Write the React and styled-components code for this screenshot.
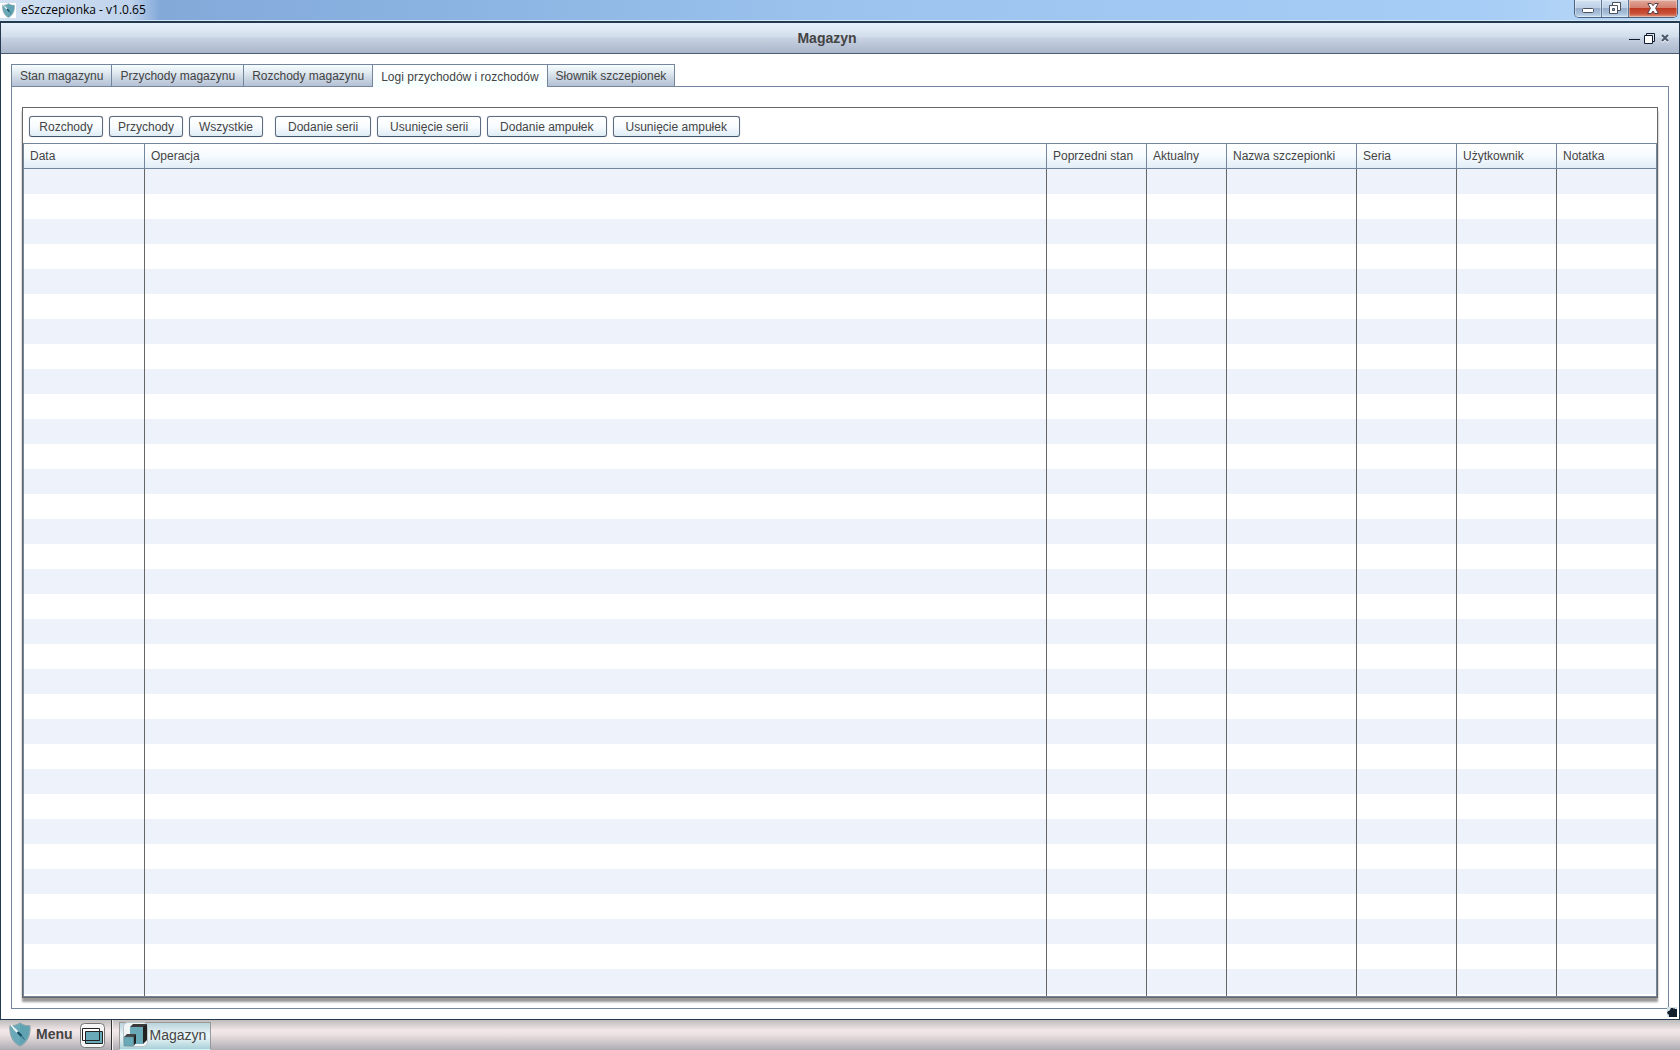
import React, { useState } from 'react';
import styled, { createGlobalStyle } from 'styled-components';

const COLOR = {
  text: '#444444',
  frame: '#23394f',
  line: '#74869e',
  grid: '#666666',
  stripe: '#eef3fb',
  teal: '#6aa9b8',
};

const GlobalStyle = createGlobalStyle`
  * {
    box-sizing: border-box;
  }
  body {
    margin: 0;
    background: #ffffff;
    color: ${COLOR.text};
    font-family: 'Liberation Sans', Arial, sans-serif;
    font-size: 12px;
  }
  button {
    font-family: inherit;
    color: inherit;
    cursor: pointer;
  }
`;

const Page = styled.div`
  display: flex;
  flex-direction: column;
  min-height: 100vh;
`;

const SystemBar = styled.header`
  display: flex;
  justify-content: space-between;
  height: 21px;
  background: linear-gradient(90deg, #d3e1f2 0, #bfd3ec 130px, #83a9d9 160px, #8ab3e2 26%, #9bc3ed 50%, #a6cdf6 88%, #bcd9f5 100%);
  border-bottom: 1px solid #d5e6f7;
`;

const SystemTitle = styled.div`
  display: flex;
  align-items: center;
  gap: 5px;
  color: #000000;
  font-family: 'Open Sans', 'Noto Sans', sans-serif;
  font-size: 12px;
  line-height: 20px;
`;

const AppIcon = styled.span`
  display: flex;
  justify-content: center;
  width: 16px;
  background: #ffffff;
`;

const SystemButtons = styled.div`
  display: flex;
  height: 18px;
  margin-right: 2px;
  border: 1px solid #4b6280;
  border-top: 0;
  border-radius: 0 0 5px 5px;
  overflow: hidden;
`;

const SystemButton = styled.button`
  display: flex;
  align-items: center;
  justify-content: center;
  width: ${(props) => (props.$close ? '48px' : '27px')};
  padding: 0;
  border: 0;
  border-right: ${(props) => (props.$close ? '0' : '1px solid #5d7696')};
  background: ${(props) =>
    props.$close
      ? 'linear-gradient(#e2a99b 0, #d4806f 45%, #bf3a22 50%, #c9523a 80%, #e09a80 100%)'
      : 'linear-gradient(#d3e2f2 0, #bdd0e6 45%, #97afcb 50%, #a9c0da 80%, #cbdff2 100%)'};
  box-shadow: inset 0 0 0 1px rgba(255, 255, 255, 0.35);
`;

const Frame = styled.main`
  position: relative;
  flex: 1;
  display: flex;
  flex-direction: column;
  border: 1px solid ${COLOR.frame};
  border-top-width: 2px;
`;

const FrameHeader = styled.div`
  display: flex;
  align-items: center;
  height: 31px;
  padding: 0 9px 0 24px;
  background: linear-gradient(#e6f1fc 0, #d3deeb 45%, #c8d2e2 50%, #aab6cb 100%);
  border-bottom: 1px solid #4a5b70;
`;

const FrameTitle = styled.h1`
  flex: 1;
  margin: 0;
  font-size: 14px;
  line-height: 20px;
  text-align: center;
`;

const FrameControls = styled.div`
  display: flex;
  align-items: center;
  gap: 4px;
`;

const FrameControl = styled.button`
  display: flex;
  padding: 0;
  border: 0;
  background: none;
`;

const FrameBody = styled.div`
  flex: 1;
  display: flex;
  flex-direction: column;
  padding: 10px;
`;

const Tabs = styled.div`
  display: flex;
  height: 22px;
`;

const Tab = styled.button`
  height: ${(props) => (props.$active ? '23px' : '22px')};
  margin-right: -1px;
  padding: ${(props) => (props.$active ? '2px 8px 0' : '0 8px')};
  border: 1px solid ${COLOR.line};
  border-bottom: 0;
  background: ${(props) =>
    props.$active ? 'linear-gradient(#ffffff, #f6ffff)' : 'linear-gradient(#f8feff 0, #dde7ee 40%, #ced9e5 60%, #b4c1d5 100%)'};
  font-size: 12px;
  line-height: 16px;
  z-index: ${(props) => (props.$active ? 1 : 0)};
`;

const TabPane = styled.section`
  flex: 1;
  display: flex;
  flex-direction: column;
  padding: 20px 10px 10px;
  border: 1px solid ${COLOR.line};
`;

const Panel = styled.div`
  border: 1px solid ${COLOR.grid};
  box-shadow: 0 4px 2px #999999;
`;

const Toolbar = styled.div`
  display: flex;
  gap: 12px;
  padding: 8px 6px 6px;
`;

const ButtonGroup = styled.div`
  display: flex;
  gap: 6px;
`;

const ToolButton = styled.button`
  min-width: 74px;
  height: 21px;
  padding: ${(props) => (props.$narrow ? '0 8px' : '0 12px')};
  border: 1px solid #5d6c80;
  border-bottom-color: #44546a;
  border-radius: 3px;
  background: linear-gradient(#ffffff 0, #f8fcff 50%, #deecf5 100%);
  box-shadow: 0 0 1px #9aa4b0;
  font-size: 12px;
  line-height: 18px;
  white-space: nowrap;
`;

const LogTable = styled.table`
  width: 100%;
  table-layout: fixed;
  border: 1px solid ${COLOR.line};
  border-collapse: separate;
  border-spacing: 0;
`;

const HeadCell = styled.th`
  width: ${(props) => props.$width || 'auto'};
  height: 25px;
  padding: 0 6px;
  border-right: 1px solid ${COLOR.line};
  border-bottom: 1px solid ${COLOR.line};
  background: linear-gradient(#ffffff 0, #f6fbff 50%, #e2edf5 100%);
  font-weight: normal;
  text-align: left;
  white-space: nowrap;

  &:last-child {
    border-right: 0;
  }
`;

const LogRow = styled.tr`
  height: 25px;

  &:nth-child(odd) {
    background: ${COLOR.stripe};
  }
`;

const EndRow = styled.tr`
  height: 2px;
`;

const LogCell = styled.td`
  padding: 0;
  border-right: 1px solid ${COLOR.grid};

  &:last-child {
    border-right: 0;
  }
`;

const Grip = styled.div`
  position: absolute;
  right: 2px;
  bottom: 2px;
  display: flex;
`;

const Taskbar = styled.footer`
  display: flex;
  align-items: center;
  height: 30px;
  padding-left: 8px;
  background: linear-gradient(#bfbcbc 0, #f3e8e9 35%, #eadfe1 50%, #aeacb2 100%);
`;

const MenuButton = styled.button`
  display: flex;
  align-items: center;
  gap: 4px;
  padding: 0 0 2px;
  border: 0;
  background: none;
  font-size: 14px;
  font-weight: bold;
`;

const DesktopButton = styled.button`
  display: flex;
  margin: 0 6px 0 7px;
  padding: 0;
  border: 0;
  background: none;
`;

const Divider = styled.span`
  width: 2px;
  height: 30px;
  margin-right: 6px;
  border-left: 1px solid #333333;
  border-right: 1px solid #f6f2f2;
`;

const TaskButton = styled.button`
  display: flex;
  align-items: center;
  align-self: flex-end;
  gap: 2px;
  height: 28px;
  padding: 0 4px 3px 3px;
  border: 1px solid #999999;
  border-bottom-color: #d5eef2;
  background: linear-gradient(#b9d3da 0, #eaf7fa 45%, #e2f1f4 60%, #a9d0d8 100%);
  font-size: 14px;
`;

const ShieldIcon = ({ width, height }) => (
  <svg width={width} height={height} viewBox="0 0 22 25" aria-hidden="true">
    <path d="M1 3.500C5 4 8 3 11 .8 14 3 17 4 21 3.500 22 13 18 21 11 24.300 4 21 0 13 1 3.500Z" fill={COLOR.teal} stroke="#93a5aa" strokeWidth="1" />
    <path d="M11 2C14 4 17 4.500 20 4.500 20.500 13 17 20 11 23Z" fill="#5fa3b2" />
    <path d="M2 3 6 7.500" stroke="#ffffff" strokeWidth="1.200" />
    <path d="m5 6.500 4.500 4.500" stroke="#e6f3f6" strokeWidth="2.200" />
    <path d="m8.500 10 4 4" stroke="#174b60" strokeWidth="2.400" />
    <path d="m12.500 14 3 3.500" stroke="#2a5f70" strokeWidth="1" />
  </svg>
);

const BoxesIcon = () => (
  <svg width="25" height="25" viewBox="0 0 25 25" aria-hidden="true">
    <rect x=".5" y=".5" width="24" height="24" rx="4" fill="#f0f5f6" stroke="#b8c4c8" />
    <path d="m7 5 3-3 14 0-3 3Z" fill="#3a3a3a" />
    <path d="m20 5 4-3v16l-4 4Z" fill="#222222" />
    <path d="M7 5h13v17H7Z" fill={COLOR.teal} />
    <path d="m1 15 3-3h9l-2 3Z" fill="#444444" />
    <path d="m10.500 15 2.500-3v9l-2.500 3Z" fill="#222222" />
    <path d="M1 15h9.500v9H1Z" fill={COLOR.teal} stroke="#55808a" strokeWidth=".5" />
  </svg>
);

const COLUMNS = [
  { name: 'Data', width: '121px' },
  { name: 'Operacja' },
  { name: 'Poprzedni stan', width: '100px' },
  { name: 'Aktualny', width: '80px' },
  { name: 'Nazwa szczepionki', width: '130px' },
  { name: 'Seria', width: '100px' },
  { name: 'Użytkownik', width: '100px' },
  { name: 'Notatka', width: '99px' },
];

const TABS = ['Stan magazynu', 'Przychody magazynu', 'Rozchody magazynu', 'Logi przychodów i rozchodów', 'Słownik szczepionek'];
const TYPE_FILTERS = ['Rozchody', 'Przychody', 'Wszystkie'];
const ACTION_FILTERS = ['Dodanie serii', 'Usunięcie serii', 'Dodanie ampułek', 'Usunięcie ampułek'];
const ROWS = Array.from({ length: 33 }, (_, i) => i);

const App = () => {
  const [activeTab, setActiveTab] = useState(TABS[3]);

  return (
    <Page>
      <GlobalStyle />
      <SystemBar>
        <SystemTitle>
          <AppIcon>
            <ShieldIcon width={13} height={15} />
          </AppIcon>
          eSzczepionka - v1.0.65
        </SystemTitle>
        <SystemButtons>
          <SystemButton aria-label="Minimalizuj">
            <svg width="12" height="16" viewBox="0 0 12 16">
              <rect x=".5" y="7.500" width="11" height="4" rx="1" fill="#ffffff" stroke="#4b5260" />
            </svg>
          </SystemButton>
          <SystemButton aria-label="Przywróć">
            <svg width="12" height="14" viewBox="0 0 12 14">
              <path d="M3.500 .5h8v8h-8Z" fill="#ffffff" stroke="#4b5260" />
              <path d="M.5 3.500h8v8h-8Z" fill="#ffffff" stroke="#4b5260" />
              <path d="M3.500 6.500h2v2h-2Z" fill="#8fa9c8" stroke="#4b5260" />
            </svg>
          </SystemButton>
          <SystemButton $close aria-label="Zamknij">
            <svg width="12" height="12" viewBox="0 0 12 12">
              <path d="M.8.500h3.500L6 2.700 7.700.500h3.500L8.600 5.200l2.800 5.300H7.800L6 8 4.200 10.500H.6l2.800-5.300Z" fill="#ffffff" stroke="#56404a" />
            </svg>
          </SystemButton>
        </SystemButtons>
      </SystemBar>

      <Frame>
        <FrameHeader>
          <FrameTitle>Magazyn</FrameTitle>
          <FrameControls>
            <FrameControl aria-label="Zwiń okno">
              <svg width="11" height="11" viewBox="0 0 11 11">
                <path d="M0 6.500h11" stroke="#101c2c" />
              </svg>
            </FrameControl>
            <FrameControl aria-label="Zmniejsz okno">
              <svg width="11" height="11" viewBox="0 0 11 11">
                <path d="M2.500 .5h8v8h-8Z" fill="#dfe8f2" stroke="#101c2c" />
                <path d="M.5 2.500h8v8h-8Z" fill="#ffffff" stroke="#101c2c" />
              </svg>
            </FrameControl>
            <FrameControl aria-label="Zamknij okno">
              <svg width="11" height="9" viewBox="0 0 11 9">
                <path d="m3 2 6 6m0-6-6 6" stroke="#ffffff" strokeWidth="2" />
                <path d="m3 1 6 6m0-6-6 6" stroke="#4a5669" strokeWidth="2" />
              </svg>
            </FrameControl>
          </FrameControls>
        </FrameHeader>

        <FrameBody>
          <Tabs role="tablist">
            {TABS.map((tab) => (
              <Tab key={tab} role="tab" aria-selected={tab === activeTab} $active={tab === activeTab} onClick={() => setActiveTab(tab)}>
                {tab}
              </Tab>
            ))}
          </Tabs>
          <TabPane role="tabpanel">
            <Panel>
              <Toolbar>
                <ButtonGroup>
                  {TYPE_FILTERS.map((label) => (
                    <ToolButton key={label} $narrow>
                      {label}
                    </ToolButton>
                  ))}
                </ButtonGroup>
                <ButtonGroup>
                  {ACTION_FILTERS.map((label) => (
                    <ToolButton key={label}>{label}</ToolButton>
                  ))}
                </ButtonGroup>
              </Toolbar>
              <LogTable>
                <thead>
                  <tr>
                    {COLUMNS.map((column) => (
                      <HeadCell key={column.name} $width={column.width}>
                        {column.name}
                      </HeadCell>
                    ))}
                  </tr>
                </thead>
                <tbody>
                  {ROWS.map((row) => (
                    <LogRow key={row}>
                      {COLUMNS.map((column) => (
                        <LogCell key={column.name} />
                      ))}
                    </LogRow>
                  ))}
                </tbody>
                <tfoot>
                  <EndRow>
                    {COLUMNS.map((column) => (
                      <LogCell key={column.name} />
                    ))}
                  </EndRow>
                </tfoot>
              </LogTable>
            </Panel>
          </TabPane>
        </FrameBody>

        <Grip>
          <svg width="10" height="10" viewBox="0 0 10 10" aria-hidden="true">
            <path d="M0 0h10v10H0Z" fill="#d5e2e8" />
            <path d="M4 1h2l1 1 1-1v1h2v8H2V8L0 6l1-2h1l1-1Z" fill="#12202e" />
          </svg>
        </Grip>
      </Frame>

      <Taskbar>
        <MenuButton>
          <ShieldIcon width={24} height={25} />
          Menu
        </MenuButton>
        <DesktopButton aria-label="Pokaż pulpit">
          <svg width="25" height="25" viewBox="0 0 25 25">
            <rect x=".5" y=".5" width="24" height="24" rx="4" fill="#f6f6f6" stroke="#777777" />
            <path d="M2.500 5.500h17v12h-17Z" fill="#ffffff" stroke="#222222" />
            <path d="M5.500 8.500h17v12h-17Z" fill={COLOR.teal} stroke="#222222" />
            <path d="M5 17.500h14.500V9" fill="none" stroke="#222222" />
          </svg>
        </DesktopButton>
        <Divider />
        <TaskButton>
          <BoxesIcon />
          Magazyn
        </TaskButton>
      </Taskbar>
    </Page>
  );
};

export default App;
